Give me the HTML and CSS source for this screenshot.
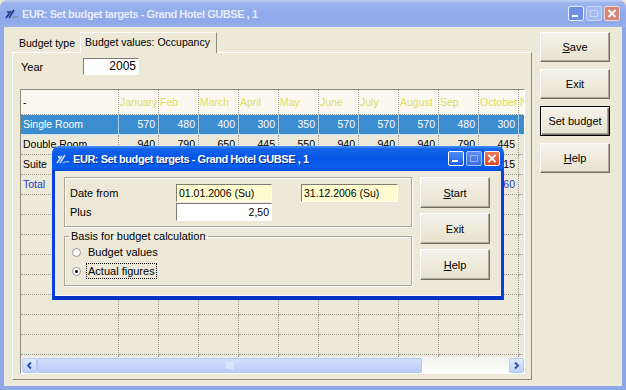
FILE: index.html
```html
<!DOCTYPE html>
<html>
<head>
<meta charset="utf-8">
<link rel="stylesheet" href="styles.css">
</head>
<body>
<div class="win">
  <div class="titlebar inactive">
    <svg class="appicon" width="14" height="12" viewBox="0 0 14 12"><path d="M1 10 L6 3 M4 10 L9 2" stroke="#1b3a8c" stroke-width="1.6" fill="none"/><path d="M7 10 Q10 8 13 9" stroke="#7a8aa8" stroke-width="1.4" fill="none"/><circle cx="3" cy="4" r="1.2" fill="#4a5a80"/></svg>
    <span class="title">EUR: Set budget targets - Grand Hotel GUBSE , 1</span>
    <div class="ctrls">
      <span class="cb min"><svg width="14" height="13"><rect x="3" y="8" width="6" height="2" fill="#fff"/></svg></span>
      <span class="cb max"><svg width="14" height="13"><rect x="3.5" y="3.5" width="7" height="6" fill="none" stroke="#c8d6f8"/></svg></span>
      <span class="cb close"><svg width="14" height="13"><path d="M3.5 3 L10.5 10 M10.5 3 L3.5 10" stroke="#fff" stroke-width="1.8"/></svg></span>
    </div>
  </div>
  <div class="frame">
    <div class="tabs-area">
      <div class="tabstrip">
        <div class="tab">Budget type</div>
        <div class="tab sel">Budget values: Occupancy</div>
      </div>
      <div class="panel">
        <div class="year-row">
          <span class="year-label">Year</span>
          <div class="field num year">2005</div>
        </div>
        <div class="grid">
          <div class="grid-view">
            <table class="gt">
              <colgroup>
                <col class="c0"><col class="cm"><col class="cm"><col class="cm"><col class="cm"><col class="cm"><col class="cm"><col class="cm"><col class="cm"><col class="cm"><col class="cm"><col class="cm">
              </colgroup>
              <thead>
                <tr><th>-</th><th>January</th><th>Feb</th><th>March</th><th>April</th><th>May</th><th>June</th><th>July</th><th>August</th><th>Sep</th><th>October</th><th>N</th></tr>
              </thead>
              <tbody>
                <tr class="sel"><td>Single Room</td><td>570</td><td>480</td><td>400</td><td>300</td><td>350</td><td>570</td><td>570</td><td>570</td><td>480</td><td>300</td><td></td></tr>
                <tr><td>Double Room</td><td>940</td><td>790</td><td>650</td><td>445</td><td>550</td><td>940</td><td>940</td><td>940</td><td>790</td><td>445</td><td></td></tr>
                <tr><td>Suite</td><td></td><td></td><td></td><td></td><td></td><td></td><td></td><td></td><td></td><td>15</td><td></td></tr>
                <tr class="total"><td>Total</td><td></td><td></td><td></td><td></td><td></td><td></td><td></td><td></td><td></td><td>760</td><td></td></tr>
                <tr class="empty"><td></td><td></td><td></td><td></td><td></td><td></td><td></td><td></td><td></td><td></td><td></td><td></td></tr>
                <tr class="empty"><td></td><td></td><td></td><td></td><td></td><td></td><td></td><td></td><td></td><td></td><td></td><td></td></tr>
                <tr class="empty"><td></td><td></td><td></td><td></td><td></td><td></td><td></td><td></td><td></td><td></td><td></td><td></td></tr>
                <tr class="empty"><td></td><td></td><td></td><td></td><td></td><td></td><td></td><td></td><td></td><td></td><td></td><td></td></tr>
                <tr class="empty"><td></td><td></td><td></td><td></td><td></td><td></td><td></td><td></td><td></td><td></td><td></td><td></td></tr>
                <tr class="empty"><td></td><td></td><td></td><td></td><td></td><td></td><td></td><td></td><td></td><td></td><td></td><td></td></tr>
                <tr class="empty"><td></td><td></td><td></td><td></td><td></td><td></td><td></td><td></td><td></td><td></td><td></td><td></td></tr>
                <tr class="empty"><td></td><td></td><td></td><td></td><td></td><td></td><td></td><td></td><td></td><td></td><td></td><td></td></tr>
                <tr class="empty"><td></td><td></td><td></td><td></td><td></td><td></td><td></td><td></td><td></td><td></td><td></td><td></td></tr>
              </tbody>
            </table>
          </div>
          <div class="hscroll">
            <span class="sb-btn"><svg width="9" height="9"><path d="M6 1.5 L3 4.5 L6 7.5" stroke="#2a4fb8" stroke-width="1.8" fill="none"/></svg></span>
            <span class="sb-thumb"><svg width="8" height="7"><path d="M1 0v7M3 0v7M5 0v7M7 0v7" stroke="#eef3ff" stroke-width="1"/></svg></span>
            <span class="sb-track"></span>
            <span class="sb-btn"><svg width="9" height="9"><path d="M3 1.5 L6 4.5 L3 7.5" stroke="#2a4fb8" stroke-width="1.8" fill="none"/></svg></span>
          </div>
        </div>
      </div>
    </div>
    <div class="side">
      <button class="btn"><u>S</u>ave</button>
      <button class="btn">Exit</button>
      <button class="btn default">Set budget</button>
      <button class="btn"><u>H</u>elp</button>
    </div>
  </div>

  <div class="dialog">
    <div class="titlebar active">
      <svg class="appicon" width="14" height="12" viewBox="0 0 14 12"><path d="M1 10 L6 3 M4 10 L9 2" stroke="#c8d8ff" stroke-width="1.6" fill="none"/><path d="M7 10 Q10 8 13 9" stroke="#9fb4e0" stroke-width="1.4" fill="none"/><circle cx="3" cy="4" r="1.2" fill="#dfe8ff"/></svg>
      <span class="title">EUR: Set budget targets - Grand Hotel GUBSE , 1</span>
      <div class="ctrls">
        <span class="cb min"><svg width="14" height="13"><rect x="3" y="8" width="6" height="2" fill="#fff"/></svg></span>
        <span class="cb max"><svg width="14" height="13"><rect x="3.5" y="3.5" width="7" height="6" fill="none" stroke="#9ab6f6"/></svg></span>
        <span class="cb close"><svg width="14" height="13"><path d="M3.5 3 L10.5 10 M10.5 3 L3.5 10" stroke="#fff" stroke-width="1.8"/></svg></span>
      </div>
    </div>
    <div class="dframe">
      <div class="dleft">
        <div class="group g1">
          <div class="frow">
            <span class="flabel">Date from</span>
            <div class="field date">01.01.2006 (Su)</div>
            <div class="field date d2">31.12.2006 (Su)</div>
          </div>
          <div class="frow">
            <span class="flabel">Plus</span>
            <div class="field num plus">2,50</div>
          </div>
        </div>
        <fieldset class="group g2">
          <legend>Basis for budget calculation</legend>
          <div class="radio"><span class="rb"></span><span class="rl">Budget values</span></div>
          <div class="radio on"><span class="rb"></span><span class="rl focus">Actual figures</span></div>
        </fieldset>
      </div>
      <div class="dbtns">
        <button class="btn tall"><u>S</u>tart</button>
        <button class="btn tall">Exit</button>
        <button class="btn tall"><u>H</u>elp</button>
      </div>
    </div>
  </div>
</div>
</body>
</html>
```

FILE: styles.css
```css
* { box-sizing: border-box; }
body {
  margin: 0;
  font: 10.5px "Liberation Sans", Arial, sans-serif;
  color: #000;
  background: #ECE9D8;
}
.win {
  width: 626px;
  height: 390px;
  position: relative;
  overflow: hidden;
  background: #ECE9D8;
  display: flex;
  flex-direction: column;
}

/* Title bars */
.titlebar {
  height: 27px;
  display: flex;
  align-items: center;
  padding: 0 6px 0 5px;
  border-radius: 7px 7px 0 0;
  flex: none;
}
.titlebar.inactive {
  background: linear-gradient(#BFD0F5 0, #9CB5EE 3px, #90AAEB 50%, #8FA9EA 85%, #9AB3EE 100%);
}
.titlebar.active {
  height: 25px;
  padding: 0 4px 0 4px;
  background: linear-gradient(#4B94F7 0, #1362EC 3px, #0556E6 50%, #0A5EEE 85%, #0049D6 100%);
}
.appicon { flex: none; }
.title {
  flex: 1;
  margin-left: 3px;
  font: bold 11px "Liberation Sans", Arial, sans-serif;
  letter-spacing: -0.45px;
  white-space: nowrap;
}
.inactive .title { color: #E4ECFB; }
.active .title { color: #fff; text-shadow: 1px 1px 0 #0A2A8C; }

.ctrls { display: flex; gap: 2px; flex: none; }
.cb {
  width: 16px;
  height: 15px;
  border-radius: 2px;
  display: flex;
  align-items: center;
  justify-content: center;
}
.inactive .cb.min { background: #6F8FE2; border: 1px solid #E8EEFC; }
.inactive .cb.max { background: #A5BBF1; border: 1px solid #C9D7F8; }
.inactive .cb.close { background: #D58779; border: 1px solid #F2D6D0; }
.active .cb.min { background: linear-gradient(#4C8CF8, #1F5FE6); border: 1px solid #fff; }
.active .cb.max { background: linear-gradient(#5F8FF2, #3A6DE8); border: 1px solid #A9C2F7; }
.active .cb.close { background: linear-gradient(#EE7A52, #D9482A); border: 1px solid #fff; }

/* Outer frame */
.frame {
  flex: 1;
  display: flex;
  align-items: flex-start;
  border: 4px solid #8EA7E9;
  border-top: 0;
  padding: 5px 0 0 8px;
}
.tabs-area { width: 520px; display: flex; flex-direction: column; }
.tabstrip {
  height: 20px;
  display: flex;
  align-items: flex-end;
  margin-left: 2px;
}
.tab {
  height: 18px;
  line-height: 18px;
  padding: 0 5px;
  white-space: nowrap;
}
.tab.sel {
  height: 21px;
  line-height: 19px;
  padding: 0 6px 0 4px;
  border: 1px solid #fff;
  border-right-color: #8D8B7E;
  border-bottom: 0;
  background: #ECE9D8;
  margin-bottom: -1px;
  position: relative;
  z-index: 1;
}
.panel {
  height: 328px;
  border: 1px solid #fff;
  border-right-color: #8D8B7E;
  border-bottom-color: #8D8B7E;
  padding: 5px 0 0 7px;
}
.year-row { display: flex; align-items: center; height: 17px; }
.year-label { width: 63px; padding-left: 1px; font-size: 11px; }
.field {
  height: 18px;
  line-height: 16px;
  border: 1px solid #fff;
  border-top-color: #7F7D72;
  border-left-color: #7F7D72;
  background: #fff;
  padding: 0 2px;
  white-space: nowrap;
}
.field.num { text-align: right; }
.field.year { width: 56px; height: 17px; line-height: 15px; font-size: 12px; }

/* Grid */
.grid {
  margin-top: 14px;
  width: 505px;
  height: 285px;
  border: 1px solid #fff;
  border-top-color: #8D8B7E;
  border-left-color: #8D8B7E;
  display: flex;
  flex-direction: column;
}
.grid-view { height: 267px; overflow: hidden; }
.gt {
  table-layout: fixed;
  width: 538px;
  border-collapse: separate;
  border-spacing: 0;
}
.gt col.c0 { width: 98px; }
.gt col.cm { width: 40px; }
.gt th, .gt td {
  padding: 0 2px;
  border-right: 1px dotted #9E9C92;
  border-bottom: 1px dotted #9E9C92;
  white-space: nowrap;
  overflow: hidden;
  font-weight: normal;
}
.gt th {
  line-height: 23px;
  text-align: left;
  color: #DEDC5A;
  background: #FBF9EF;
  padding: 1px 0 0 1px;
}
.gt th:first-child { color: #000; padding-left: 2px; }
.gt td { line-height: 19px; text-align: right; padding-right: 3px; }
.gt td:first-child { text-align: left; padding-left: 2px; }
.gt tr.sel td {
  background: #3C8DCF;
  color: #fff;
  border-right: 1px solid #A8CCEC;
  border-bottom: 1px solid #CFE3F5;
}
.gt tr.total td { color: #1E3FD0; }
.gt tr.empty td { height: 20px; }

.hscroll {
  height: 16px;
  display: flex;
  align-items: center;
  background: linear-gradient(#F2F2EE, #FEFEFD);
  padding: 0 0 0 1px;
}
.sb-btn {
  width: 15px;
  height: 15px;
  flex: none;
  border: 1px solid #B7CAF5;
  border-radius: 2px;
  background: linear-gradient(#E3ECFE, #BFD1FA);
  display: flex;
  align-items: center;
  justify-content: center;
}
.sb-thumb {
  width: 385px;
  height: 15px;
  flex: none;
  border: 1px solid #AFC4F2;
  border-radius: 2px;
  background: linear-gradient(#D2E0FD, #B9CDF7);
  display: flex;
  align-items: center;
  justify-content: center;
}
.sb-track { flex: 1; }

/* Buttons */
.side {
  display: flex;
  flex-direction: column;
  gap: 7px;
  margin-left: 8px;
}
.btn {
  width: 70px;
  height: 30px;
  font: 11px "Liberation Sans", Arial, sans-serif;
  color: #000;
  background: linear-gradient(#F4F3EC, #ECE9D8 60%, #E4E1D1);
  border: 1px solid #fff;
  border-right-color: #716F64;
  border-bottom-color: #716F64;
  box-shadow: inset -1px -1px 0 #ACA899;
  padding: 0;
  white-space: nowrap;
}
.btn.default {
  border: 1px solid #000;
  box-shadow: inset 1px 1px 0 #fff, inset -1px -1px 0 #716F64, inset -2px -2px 0 #ACA899;
}
.btn.tall { height: 31px; }
.btn u { text-decoration: underline; }

/* Dialog */
.dialog {
  position: absolute;
  left: 52px;
  top: 146px;
  width: 452px;
  height: 154px;
  display: flex;
  flex-direction: column;
  z-index: 5;
}
.dframe {
  flex: 1;
  display: flex;
  align-items: flex-start;
  gap: 8px;
  background: #ECE9D8;
  border: 3px solid #0A40DA;
  border-top: 0;
  border-bottom: 4px solid #0533C8;
  box-shadow: inset 0 -1px 0 #fff;
  padding: 6px 0 0 9px;
}
.dleft { width: 348px; display: flex; flex-direction: column; }
.group {
  border: 1px solid #A9A798;
  box-shadow: inset 1px 1px 0 #fff, 1px 1px 0 #fff;
}
.g1 {
  height: 50px;
  padding: 6px 0 0 5px;
  display: flex;
  flex-direction: column;
  gap: 1px;
}
.frow { display: flex; align-items: center; height: 18px; }
.flabel { width: 106px; font-size: 11px; }
.field.date { width: 96px; background: #FFFDCF; }
.field.d2 { width: 97px; margin-left: 29px; }
.field.plus { width: 96px; }

.g2 {
  margin: 3px 0 0 0;
  padding: 0 0 0 4px;
  height: 56px;
  min-width: 0;
}
.g2 legend { padding: 0 2px; line-height: 13px; font-size: 11px; }
.radio {
  display: flex;
  align-items: center;
  height: 16px;
  margin-top: 1px;
  padding-left: 2px;
  font-size: 11px;
}
.radio + .radio { margin-top: 3px; }
.rb {
  width: 9px;
  height: 9px;
  border-radius: 50%;
  border: 1px solid #9A988C;
  background: #fff;
  margin: 0 5px 0 1px;
  flex: none;
  display: flex;
  align-items: center;
  justify-content: center;
}
.radio.on .rb::after {
  content: "";
  width: 3px;
  height: 3px;
  border-radius: 50%;
  background: #000;
}
.rl { line-height: 14px; padding: 0 1px; border: 1px solid transparent; }
.rl.focus { border: 1px dotted #000; }

.dbtns { width: 70px; display: flex; flex-direction: column; gap: 5px; }
```
